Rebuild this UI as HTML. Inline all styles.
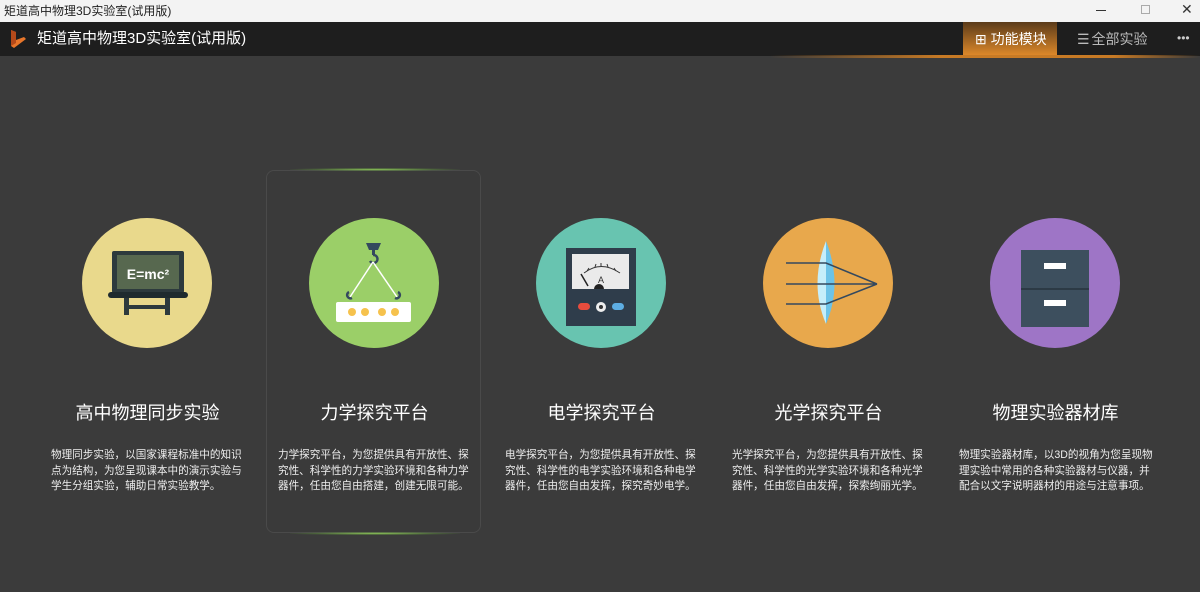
<!DOCTYPE html>
<html><head><meta charset="utf-8"><style>
*{margin:0;padding:0;box-sizing:border-box}
body{width:1200px;height:592px;overflow:hidden;background:#3b3b3b;font-family:"Liberation Sans","Noto Sans CJK SC",sans-serif;position:relative}
.tb{position:absolute;left:0;top:0;width:1200px;height:22px;background:#f3f3f3;color:#222;font-size:12px;line-height:22px;padding-left:4px}
.ab{position:absolute;left:0;top:22px;width:1200px;height:34px;background:#1e1e1e}
.ab .t{position:absolute;left:37px;top:0;line-height:34px;color:#fff;font-size:15px}
.tab1{position:absolute;left:963px;top:22px;width:94px;height:34px;background:linear-gradient(#5a3b1a,#e08a2a);color:#fff;font-size:14px;line-height:34px;padding-left:12px}
.tab2{position:absolute;left:1077px;top:22px;color:#bbb;font-size:14px;line-height:34px}
.glow{position:absolute;left:770px;top:55px;width:430px;height:3px;background:linear-gradient(90deg,transparent,#c77a25 40%,#c77a25 80%,transparent)}
.card{position:absolute;left:266px;top:170px;width:215px;height:363px;border:1px solid #4a4a4a;border-radius:8px;background:#3a3a3a}
.gl{position:absolute;height:3px;border-radius:2px;background:radial-gradient(ellipse,#8fc85a 0%,rgba(100,160,60,.4) 50%,transparent 75%)}
.c{position:absolute;width:130px;height:130px;border-radius:50%;top:218px}
.h{position:absolute;top:401px;width:227px;text-align:center;color:#fff;font-size:18px;line-height:24px}
.d{position:absolute;top:448px;white-space:nowrap;color:#eee;font-size:10.6px;line-height:15.5px}
</style></head><body>
<div class="tb">矩道高中物理3D实验室(试用版)</div>
<div style="position:absolute;left:1096px;top:10px;width:10px;height:1px;background:#333"></div>
<div style="position:absolute;left:1141px;top:5px;width:9px;height:9px;border:1px solid #aaa"></div>
<div style="position:absolute;left:1181px;top:1px;font-size:14px;color:#333">✕</div>
<div class="ab"><svg style="position:absolute;left:9px;top:7px" width="18" height="20" viewBox="0 0 18 20"><path d="M2 1 L7 3 L7 11 L15 8 L17 10 L5 19 L2 17 Z" fill="#e8762a"/><path d="M2 1 L7 3 L7 14 L2 17Z" fill="#b54a1a"/></svg><div class="t">矩道高中物理3D实验室(试用版)</div></div>
<div class="tab1">⊞ 功能模块</div>
<div class="tab2"><span style="letter-spacing:-2px">☰</span> 全部实验</div>
<div style="position:absolute;left:1177px;top:31px;color:#ccc;font-size:12px">•••</div>
<div class="glow"></div>
<div class="card"></div>
<div class="gl" style="left:290px;top:168px;width:170px"></div>
<div class="gl" style="left:290px;top:532px;width:170px"></div>

<div class="c" style="left:82px;background:#e9d98c"></div>
<svg style="position:absolute;left:82px;top:218px" width="130" height="130"><rect x="30" y="33" width="72" height="42" rx="2" fill="#2d3a3d"/><rect x="35" y="37" width="62" height="34" fill="#57684f"/><text x="66" y="61" text-anchor="middle" fill="#fff" font-family="Liberation Sans" font-weight="bold" font-size="14">E=mc²</text><rect x="26" y="74" width="80" height="6" rx="3" fill="#1f2b2e"/><rect x="42" y="80" width="5" height="17" fill="#2d3a3d"/><rect x="83" y="80" width="5" height="17" fill="#2d3a3d"/><rect x="42" y="87" width="46" height="4" fill="#2d3a3d"/></svg>

<div class="c" style="left:309px;background:#9bcf68"></div>
<svg style="position:absolute;left:309px;top:218px" width="130" height="130"><path d="M57 25h15l-3 7h-9z" fill="#34495e"/><rect x="63" y="31" width="3" height="6" fill="#34495e"/><path d="M64 37a4 4 0 1 1 -3 6" stroke="#34495e" stroke-width="2.5" fill="none"/><path d="M64 44 L41 79 M64 44 L88 79" stroke="#fff" stroke-width="1.5"/><path d="M40 74a3 3 0 1 0 3 6M89 74a3 3 0 1 1 -3 6" stroke="#34495e" stroke-width="2.5" fill="none"/><rect x="27" y="84" width="75" height="20" rx="2" fill="#fff"/><circle cx="43" cy="94" r="4" fill="#f6c24d"/><circle cx="56" cy="94" r="4" fill="#f6c24d"/><circle cx="73" cy="94" r="4" fill="#f6c24d"/><circle cx="86" cy="94" r="4" fill="#f6c24d"/></svg>

<div class="c" style="left:536px;background:#68c4b0"></div>
<svg style="position:absolute;left:536px;top:218px" width="130" height="130"><rect x="30" y="30" width="70" height="78" fill="#2f3d4b"/><rect x="36" y="36" width="57" height="35" fill="#eaeaea"/><path d="M48 55 Q65 42 84 55" stroke="#333" fill="none" stroke-width="1"/><path d="M53 50l-2 3M60 46l-1 3M65 45v3M71 46l1 3M78 50l2 3" stroke="#333" stroke-width="1"/><path d="M52 68 L45 56" stroke="#222" stroke-width="1.5"/><path d="M58 71a5 5 0 0 1 10 0z" fill="#222"/><text x="65" y="65" text-anchor="middle" font-size="9" fill="#333" font-family="Liberation Sans">A</text><rect x="42" y="85" width="12" height="7" rx="3.5" fill="#e84c3d"/><circle cx="65" cy="89" r="5" fill="#eee"/><circle cx="65" cy="89" r="2" fill="#333"/><rect x="76" y="85" width="12" height="7" rx="3.5" fill="#5dade2"/></svg>

<div class="c" style="left:763px;background:#e8a84c"></div>
<svg style="position:absolute;left:763px;top:218px" width="130" height="130"><path d="M63 23 Q46 66 63 106Z" fill="#c5eefa"/><path d="M63 23 Q80 66 63 106Z" fill="#6cc3e8"/><g stroke="#34495e" stroke-width="1.5" fill="none"><path d="M23 45h40l51 21M23 66h91M23 86h40l51-20"/></g></svg>

<div class="c" style="left:990px;background:#9e75c6"></div>
<svg style="position:absolute;left:990px;top:218px" width="130" height="130"><rect x="31" y="32" width="68" height="39" fill="#3d4f5e"/><rect x="31" y="71" width="68" height="38" fill="#3d4f5e"/><rect x="31" y="70" width="68" height="2" fill="#2c3a45"/><rect x="54" y="45" width="22" height="6" fill="#fff"/><rect x="54" y="82" width="22" height="6" fill="#fff"/></svg>

<div class="h" style="left:34px">高中物理同步实验</div>
<div class="h" style="left:261px">力学探究平台</div>
<div class="h" style="left:488px">电学探究平台</div>
<div class="h" style="left:715px">光学探究平台</div>
<div class="h" style="left:942px">物理实验器材库</div>
<div class="d" style="left:51px">物理同步实验，以国家课程标准中的知识<br>点为结构，为您呈现课本中的演示实验与<br>学生分组实验，辅助日常实验教学。</div>
<div class="d" style="left:278px">力学探究平台，为您提供具有开放性、探<br>究性、科学性的力学实验环境和各种力学<br>器件，任由您自由搭建，创建无限可能。</div>
<div class="d" style="left:505px">电学探究平台，为您提供具有开放性、探<br>究性、科学性的电学实验环境和各种电学<br>器件，任由您自由发挥，探究奇妙电学。</div>
<div class="d" style="left:732px">光学探究平台，为您提供具有开放性、探<br>究性、科学性的光学实验环境和各种光学<br>器件，任由您自由发挥，探索绚丽光学。</div>
<div class="d" style="left:959px">物理实验器材库，以3D的视角为您呈现物<br>理实验中常用的各种实验器材与仪器，并<br>配合以文字说明器材的用途与注意事项。</div>
</body></html>
